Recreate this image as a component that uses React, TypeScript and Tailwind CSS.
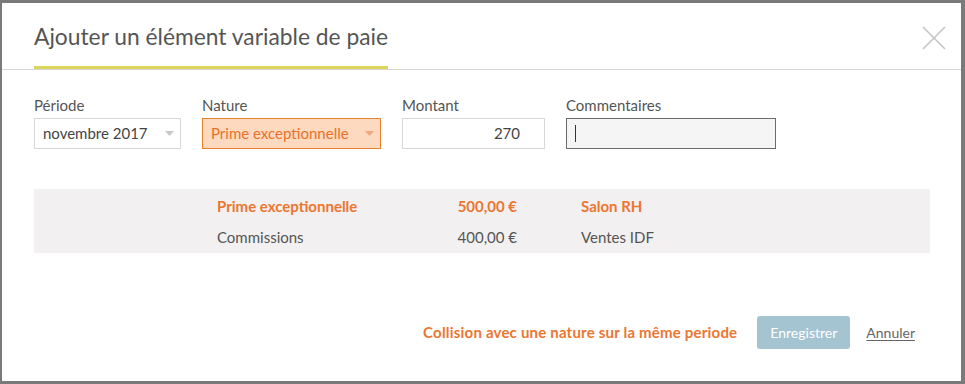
const rows = [
  { nature: "Prime exceptionnelle", amount: "500,00 €", comment: "Salon RH", hit: true },
  { nature: "Commissions", amount: "400,00 €", comment: "Ventes IDF", hit: false },
];

function Caret() {
  return (
    <svg width="9" height="5" viewBox="0 0 9 5" className="shrink-0">
      <path d="M0 0 L9 0 L4.5 5 Z" fill="currentColor" />
    </svg>
  );
}

export default function App() {
  return (
    <div className="h-[384px] w-[965px] overflow-hidden bg-[#7a7a7a] pl-[2px] pt-[3px] font-['Lato',sans-serif]">
      <div className="flex h-[378px] w-[959px] flex-col bg-white">
        {/* header */}
        <div className="flex h-[67px] items-start justify-between border-b border-[#d6d6d6] pl-[32px] pr-[14px]">
          <div className="flex h-full flex-col">
            <h1 className="pt-[17px] text-[22.8px] leading-[32px] text-[#555]">
              Ajouter un élément variable de paie
            </h1>
            <div className="mt-auto h-[3px] w-[354px] bg-[#dcd75c]" />
          </div>
          <button className="mt-[22px] text-[#c4c4c4]">
            <svg width="26" height="26" viewBox="0 0 26 26">
              <path d="M2 2 L24 24 M24 2 L2 24" stroke="currentColor" strokeWidth="1.6" />
            </svg>
          </button>
        </div>

        {/* form */}
        <div className="flex gap-[21px] pl-[32px] pt-[26px] text-[15px] text-[#555]">
          <div className="flex flex-col">
            <label className="mb-[4px] leading-[18px]">Période</label>
            <div className="flex h-[31px] w-[147px] items-center justify-between border border-[#d8d8d8] pl-[8px] pr-[6px]">
              <span className="text-[#444]">novembre 2017</span>
              <span className="text-[#c8c8c8]"><Caret /></span>
            </div>
          </div>
          <div className="flex flex-col">
            <label className="mb-[4px] leading-[18px]">Nature</label>
            <div className="flex h-[31px] w-[179px] items-center justify-between border border-[#e8822f] bg-[#fdd9c0] pl-[8px] pr-[6px]">
              <span className="text-[#e8712a]">Prime exceptionnelle</span>
              <span className="text-[#f0a77a]"><Caret /></span>
            </div>
          </div>
          <div className="flex flex-col">
            <label className="mb-[4px] leading-[18px]">Montant</label>
            <div className="flex h-[31px] w-[143px] items-center justify-end border border-[#d8d8d8] pr-[24px]">
              <span className="text-[#444]">270</span>
            </div>
          </div>
          <div className="flex flex-col">
            <label className="mb-[4px] leading-[18px]">Commentaires</label>
            <div className="flex h-[31px] w-[210px] items-center border border-[#6b6b6b] bg-[#f5f5f5] pl-[8px]">
              <span className="h-[17px] w-px bg-[#333]" />
            </div>
          </div>
        </div>

        {/* conflicts */}
        <div className="ml-[32px] mr-[31px] mt-[40px] bg-[#f2f0f0] pt-[2px] text-[15px]">
          {rows.map((r) => (
            <div
              key={r.nature}
              className={`grid h-[31px] grid-cols-[183px_200px_100px_64px_1fr] items-center whitespace-nowrap ${
                r.hit ? "font-bold text-[#ec7630]" : "text-[#555]"
              }`}
            >
              <span />
              <span>{r.nature}</span>
              <span className="text-right">{r.amount}</span>
              <span />
              <span>{r.comment}</span>
            </div>
          ))}
        </div>

        {/* footer */}
        <div className="mt-auto flex items-center justify-end pb-[32px] pr-[46px] text-[15px]">
          <span className="font-bold tracking-[0.2px] text-[#ec7630]">Collision avec une nature sur la même periode</span>
          <button className="ml-[20px] h-[33px] w-[93px] rounded-[3px] bg-[#a4c4d2] text-[14px] text-white">Enregistrer</button>
          <button className="ml-[16px] text-[14px] text-[#666] underline underline-offset-2">Annuler</button>
        </div>
      </div>
    </div>
  );
}
